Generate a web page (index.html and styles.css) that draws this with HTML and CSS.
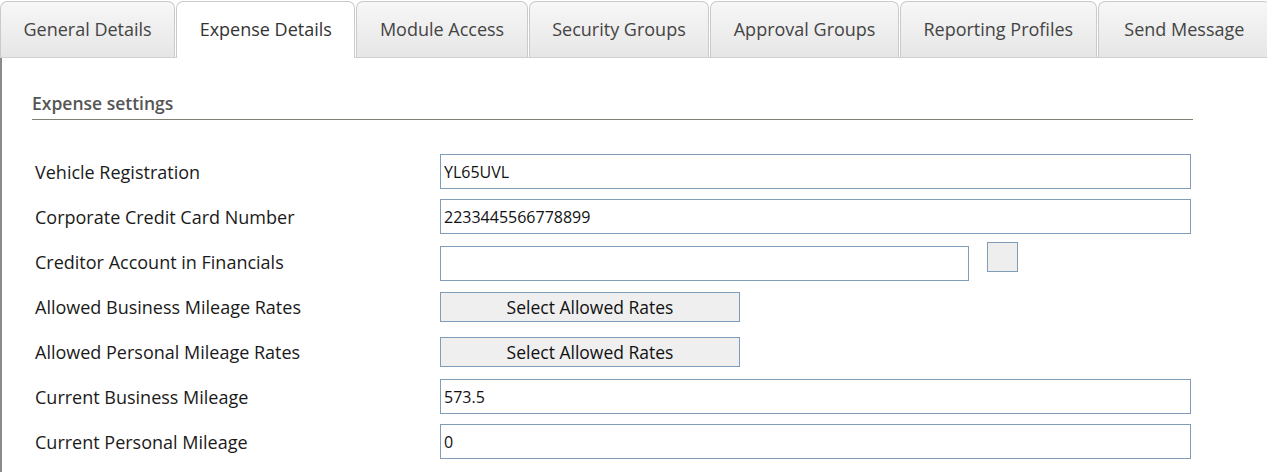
FILE: index.html
```html
<!DOCTYPE html>
<html>
<head>
    <title>Expense Details</title>
    <meta charset="UTF-8">
    <link rel="stylesheet" href="styles.css">
</head>
<body>
<div class="tabs">
    <div class="tab">General Details</div>
    <div class="tab active">Expense Details</div>
    <div class="tab">Module Access</div>
    <div class="tab">Security Groups</div>
    <div class="tab">Approval Groups</div>
    <div class="tab">Reporting Profiles</div>
    <div class="tab">Send Message</div>
</div>
<div class="panel">
    <h2 class="section-title">Expense settings</h2>
    <div class="form">
        <div class="row">
            <label>Vehicle Registration</label>
            <input class="field" type="text" value="YL65UVL">
        </div>
        <div class="row">
            <label>Corporate Credit Card Number</label>
            <input class="field" type="text" value="2233445566778899">
        </div>
        <div class="row">
            <label>Creditor Account in Financials</label>
            <div class="lookup">
                <input class="field short" type="text" value="">
                <button class="pick"></button>
            </div>
        </div>
        <div class="row">
            <label>Allowed Business Mileage Rates</label>
            <button class="select-btn">Select Allowed Rates</button>
        </div>
        <div class="row">
            <label>Allowed Personal Mileage Rates</label>
            <button class="select-btn">Select Allowed Rates</button>
        </div>
        <div class="row">
            <label>Current Business Mileage</label>
            <input class="field" type="text" value="573.5">
        </div>
        <div class="row">
            <label>Current Personal Mileage</label>
            <input class="field" type="text" value="0">
        </div>
    </div>
</div>
</body>
</html>
```
FILE: styles.css
```css
body {
    margin: 0;
    background-color: #fff;
    font-family: "Open Sans", sans-serif;
    color: #222;
    overflow: hidden;
}

.tabs {
    display: flex;
    height: 57px;
    border-bottom: 1px solid #cfcfcf;
}
.tab {
    display: flex;
    align-items: center;
    justify-content: center;
    padding: 0 22.5px 1px 22.5px;
    margin-top: 1px;
    margin-right: 1px;
    font-size: 18px;
    white-space: nowrap;
    color: #444;
    background: linear-gradient(#f7f7f7, #e6e6e6);
    border: 1px solid #cacaca;
    border-bottom: none;
    border-radius: 7px 7px 0 0;
}
.tab.active {
    background: #fff;
    color: #333;
    height: 57px;
    padding-bottom: 3px;
    box-sizing: border-box;
    margin-bottom: -1px;
}
.tab:last-child {
    flex: 1;
    margin-right: -4px;
}

.panel {
    border-left: 2px solid #8a8a8a;
    padding: 33px 0 0 30px;
    height: 400px;
}
.section-title {
    margin: 0;
    width: 1161px;
    font-size: 17.5px;
    font-weight: 600;
    color: #555;
    padding-bottom: 4px;
    border-bottom: 1px solid #7f7f72;
}

.form {
    margin-top: 29px;
    padding-left: 3px;
}
.row {
    display: flex;
    align-items: center;
    height: 45px;
}
.row label {
    width: 405px;
    font-size: 18px;
    color: #1a1a1a;
}
.field {
    box-sizing: border-box;
    width: 751px;
    height: 35px;
    padding: 0 8px 0 3px;
    border: 1px solid #7f9db9;
    font-family: "Open Sans", sans-serif;
    font-size: 16px;
    color: #111;
    outline: none;
}
.field.short {
    width: 529px;
}
.lookup {
    display: flex;
    align-items: flex-start;
    gap: 18px;
    padding-top: 4px;
}
.pick {
    width: 31px;
    height: 30px;
    margin-top: -4px;
    background: #eee;
    border: 1px solid #7f9db9;
}
.select-btn {
    box-sizing: border-box;
    width: 300px;
    height: 30px;
    background: #efefef;
    border: 1px solid #7f9db9;
    font-family: "Open Sans", sans-serif;
    font-size: 17.5px;
    color: #111;
}
```
